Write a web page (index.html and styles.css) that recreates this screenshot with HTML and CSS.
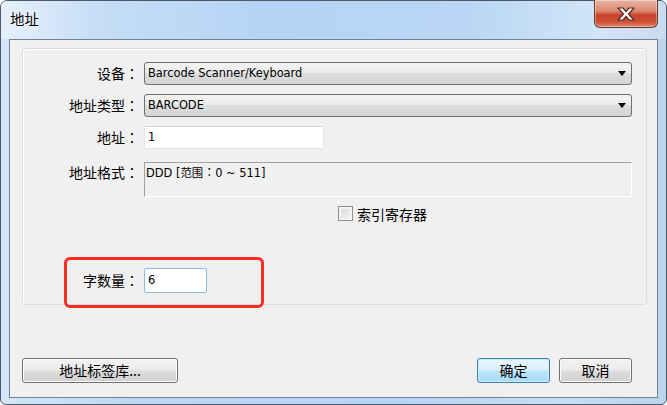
FILE: index.html
```html
<!DOCTYPE html>
<html lang="zh-CN">
<head>
<meta charset="utf-8">
<link rel="stylesheet" href="styles.css">
</head>
<body>
<div class="window">
  <div class="titlebar">
    <div class="title">地址</div>
    <div class="close">
      <svg width="24" height="16" viewBox="0 0 24 16"><path d="M4 2 L9 2 L12 5.5 L15 2 L20 2 L14.5 8 L20 14 L15 14 L12 10.5 L9 14 L4 14 L9.5 8 Z" fill="#ffffff" stroke="#5a2a22" stroke-width="1.2" stroke-linejoin="round"/></svg>
    </div>
  </div>
  <div class="client">
    <div class="group">
      <div class="form">
        <div class="label r1">设备<span class="colon" lang="zh-TW">：</span></div>
        <div class="combo r1"><span class="ctext">Barcode Scanner/Keyboard</span><span class="arrow"></span></div>

        <div class="label r2">地址类型<span class="colon" lang="zh-TW">：</span></div>
        <div class="combo r2"><span class="ctext">BARCODE</span><span class="arrow"></span></div>

        <div class="label r3">地址<span class="colon" lang="zh-TW">：</span></div>
        <div class="field r3"><div class="input addr">1</div></div>

        <div class="label r4 top">地址格式<span class="colon" lang="zh-TW">：</span></div>
        <div class="format r4">DDD [范围<span class="colon" lang="zh-TW">：</span>0 ~ 511]</div>

        <div class="field r5 checkrow"><span class="checkbox"></span><span class="cklabel">索引寄存器</span></div>

        <div class="label r6">字数量<span class="colon" lang="zh-TW">：</span></div>
        <div class="field r6"><div class="input count">6</div></div>
      </div>
    </div>
    <div class="buttons">
      <div class="btn lib">地址标签库...</div>
      <div class="spacer"></div>
      <div class="btn ok">确定</div>
      <div class="btn cancel">取消</div>
    </div>
  </div>
  <div class="highlight"></div>
</div>
</body>
</html>
```

FILE: styles.css
```css
html, body {
  margin: 0;
  padding: 0;
  background: #ffffff;
}
body {
  width: 667px;
  height: 405px;
  overflow: hidden;
  font-family: "Noto Sans CJK SC", "DejaVu Sans", sans-serif;
  color: #000;
}
.window {
  position: relative;
  box-sizing: border-box;
  width: 667px;
  height: 405px;
  border: 1px solid #4a5868;
  border-radius: 7px 7px 6px 6px;
  background: linear-gradient(90deg, #d4e6f8 0%, #bcd8f4 20%, #b7d5f4 60%, #c6def4 85%, #bcd3ea 100%);
  display: flex;
  flex-direction: column;
}
.titlebar {
  height: 38px;
  display: flex;
  align-items: flex-start;
  background: linear-gradient(90deg, #e6f0fb 0%, #c5ddf6 15%, #b5d4f5 40%, #b9d6f4 70%, #d2e5f8 90%, #c9dcef 100%);
  border-radius: 6px 6px 0 0;
}
.title {
  margin: 8px 0 0 9px;
  font-size: 14.5px;
  line-height: 20px;
  color: #000;
  text-shadow: 0 0 6px #ffffff, 0 0 3px #ffffff;
}
.close {
  margin-left: auto;
  margin-right: 8px;
  margin-top: -1px;
  width: 64px;
  height: 28px;
  box-sizing: border-box;
  border: 1px solid #6d3b33;
  border-top: none;
  border-radius: 0 0 6px 6px;
  background: linear-gradient(180deg, #e9b3a4 0%, #dc8a73 40%, #c8452c 55%, #cd5034 80%, #e0886c 100%);
  box-shadow: inset 0 0 0 1px rgba(255,255,255,0.35);
  display: flex;
  align-items: center;
  justify-content: center;
}
.client {
  box-sizing: border-box;
  height: 359px;
  margin: 0 8px;
  border: 1px solid #6f8298;
  background: #f0f0f0;
  display: flex;
  flex-direction: column;
}
.group {
  box-sizing: border-box;
  margin: 8px 10px 0 12px;
  height: 257px;
  border: 1px solid #d5dfe5;
  border-radius: 3px;
  box-shadow: inset 1px 1px 0 #ffffff;
}
.form {
  display: grid;
  grid-template-columns: 115px 488px;
  column-gap: 6px;
  grid-template-rows: 23px 23px 23px 35px 15px 25px;
  row-gap: 9px;
  padding-top: 13px;
}
.r1 { grid-row: 1; }
.r2 { grid-row: 2; }
.r3 { grid-row: 3; }
.r4 { grid-row: 4; margin-top: 4px; }
.r5 { grid-row: 5; margin-top: 4px; }
.r6 { grid-row: 6; margin-top: 42px; }
.label {
  grid-column: 1;
  font-size: 14px;
  line-height: 23px;
  text-align: right;
  white-space: nowrap;
}
.colon {
  font-family: "Noto Sans CJK TC", sans-serif;
}
.label .colon {
  margin-right: -1px;
}
.label.r6 { line-height: 25px; }
.label.top { line-height: 20px; }
.combo, .field, .format { grid-column: 2; }
.combo {
  box-sizing: border-box;
  height: 23px;
  border: 1px solid #707070;
  border-radius: 3px;
  background: linear-gradient(180deg, #f3f3f3 0%, #ececec 45%, #dedede 50%, #d3d3d3 100%);
  display: flex;
  align-items: center;
  padding: 0 0 0 3px;
}
.ctext {
  font-family: "DejaVu Sans", sans-serif;
  font-size: 11.4px;
  line-height: 21px;
  flex: 1;
}
.arrow {
  width: 0;
  height: 0;
  border-left: 4px solid transparent;
  border-right: 4px solid transparent;
  border-top: 5px solid #000;
  margin-right: 5px;
}
.input {
  box-sizing: border-box;
  height: 23px;
  background: #ffffff;
  border: 1px solid #e2e6ea;
  border-top-color: #d0d4d8;
  border-radius: 2px;
  font-family: "DejaVu Sans", sans-serif;
  font-size: 11.4px;
  line-height: 21px;
  padding-left: 3px;
}
.addr { width: 180px; }
.count {
  width: 63px;
  height: 25px;
  line-height: 23px;
  border-color: #8bbbe8;
}
.format {
  box-sizing: border-box;
  height: 35px;
  background: #f0f0f0;
  border: 1px solid #ffffff;
  border-top-color: #a0a0a0;
  border-left-color: #a0a0a0;
  font-family: "DejaVu Sans", "Noto Sans CJK SC", sans-serif;
  font-size: 11.4px;
  line-height: 16px;
  padding: 1px 0 0 1px;
}
.format .colon {
  font-size: 12px;
}
.checkrow {
  display: flex;
  align-items: center;
  padding-left: 194px;
  height: 15px;
}
.checkbox {
  box-sizing: border-box;
  width: 15px;
  height: 15px;
  border: 1px solid #8f8f8f;
  background: linear-gradient(135deg, #d8d8d8 0%, #f4f4f4 100%);
  box-shadow: inset 0 0 0 2px #f4f4f4;
}
.cklabel {
  margin-left: 4px;
  font-size: 14px;
  line-height: 18px;
}
.buttons {
  margin-top: auto;
  margin-bottom: 14px;
  padding: 0 25px 0 12px;
  display: flex;
  gap: 9px;
}
.spacer { flex: 1; }
.btn {
  box-sizing: border-box;
  height: 25px;
  border: 1px solid #707070;
  border-radius: 3px;
  background: linear-gradient(180deg, #f2f2f2 0%, #ebebeb 48%, #dddddd 52%, #cfcfcf 100%);
  box-shadow: inset 0 0 0 1px #fcfcfc;
  font-size: 14px;
  line-height: 23px;
  text-align: center;
}
.lib { width: 156px; }
.ok, .cancel { width: 73px; }
.ok {
  border-color: #3c7fb1;
  background: linear-gradient(180deg, #eaf6fd 0%, #d9f0fc 48%, #bee6fd 52%, #a7d9f5 100%);
  box-shadow: inset 0 0 0 1px #cdeefe;
}
.highlight {
  position: absolute;
  left: 63px;
  top: 256px;
  width: 200px;
  height: 51px;
  box-sizing: border-box;
  border: 3px solid #ff2a1e;
  border-radius: 6px;
}
```
